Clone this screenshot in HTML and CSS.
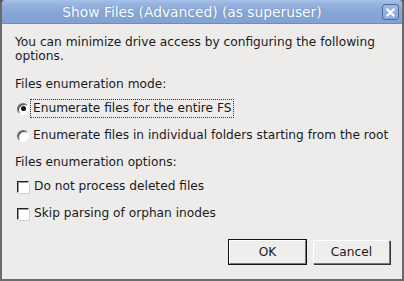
FILE: index.html
```html
<!DOCTYPE html>
<html lang="en">
<head>
    <meta charset="UTF-8">
    <title>Show Files (Advanced) (as superuser)</title>
    <link rel="stylesheet" href="styles.css">
</head>
<body>
    <!-- Dialog window -->
    <div class="window">
        <div class="titlebar">
            <span class="title">Show Files (Advanced) (as superuser)</span>
            <span class="close">
                <svg width="11" height="11" viewBox="0 0 11 11">
                    <path d="M2.5 2.5 L8.5 8.5 M8.5 2.5 L2.5 8.5" stroke="#fff" stroke-width="2.2" stroke-linecap="square"/>
                </svg>
            </span>
        </div>

        <div class="content">
            <p class="intro">You can minimize drive access by configuring the following options.</p>

            <p class="group-label">Files enumeration mode:</p>
            <div class="option">
                <span class="radio checked"></span>
                <span class="label focused">Enumerate files for the entire FS</span>
            </div>
            <div class="option">
                <span class="radio"></span>
                <span class="label">Enumerate files in individual folders starting from the root</span>
            </div>

            <p class="group-label options-label">Files enumeration options:</p>
            <div class="option">
                <span class="check"></span>
                <span class="label">Do not process deleted files</span>
            </div>
            <div class="option">
                <span class="check"></span>
                <span class="label">Skip parsing of orphan inodes</span>
            </div>

            <div class="buttons">
                <button class="btn default">OK</button>
                <button class="btn">Cancel</button>
            </div>
        </div>
    </div>
</body>
</html>
```

FILE: styles.css
```css
body {
    margin: 0;
    padding: 0;
    font-family: "DejaVu Sans", sans-serif;
    font-size: 12.2px;
    color: #1a1a1a;
    background-color: #5e5e5e;
}
/* Window frame */
.window {
    width: 404px;
    height: 281px;
    box-sizing: border-box;
    background-color: #edeceb;
    border-left: 2px solid #6a6a6a;
    border-right: 2px solid #6a6a6a;
    border-bottom: 2px solid #6a6a6a;
    border-radius: 5px 5px 0 0;
    overflow: hidden;
    display: flex;
    flex-direction: column;
}
/* Title bar */
.titlebar {
    height: 23px;
    margin: 0 -2px;
    display: flex;
    align-items: center;
    justify-content: center;
    position: relative;
    background: linear-gradient(#a8c1e8 0, #97b4e1 4px, #87a6d6 12px, #83a2d3 100%);
    border-bottom: 1px solid #6d8cbd;
    border-radius: 5px 5px 0 0;
}
.titlebar .title {
    color: #fff;
    font-size: 13.8px;
    text-shadow: 0 0 1px #5b7cb0;
    margin-left: -20px;
}
.titlebar .close {
    position: absolute;
    right: 5px;
    top: 4px;
    width: 15px;
    height: 14px;
    border: 1px solid #4c6b9c;
    border-radius: 3px;
    background: linear-gradient(#9db8e2, #8aa9d8);
    display: flex;
    align-items: center;
    justify-content: center;
}
/* Content */
.content {
    padding: 11px 13px 0 13px;
    flex: 1;
    display: flex;
    flex-direction: column;
}
.content p {
    margin: 0;
    line-height: 14px;
}
.intro {
    margin-bottom: 14px !important;
}
.group-label {
    margin-bottom: 4px !important;
}
.options-label {
    margin-top: 6px !important;
    margin-bottom: 4px !important;
}
.option {
    display: flex;
    align-items: center;
    height: 27px;
    padding-left: 2px;
    white-space: nowrap;
}
.option .label {
    margin-left: 1px;
    padding: 1px 2px;
    border: 1px solid transparent;
    line-height: 15px;
}
.option .label.focused {
    border: 1px dotted #333;
}
/* Radio buttons */
.radio {
    flex-shrink: 0;
    width: 12px;
    height: 12px;
    border-radius: 50%;
    background-color: #fff;
    box-sizing: border-box;
    border: 1px solid;
    border-color: #6e6e6e #fff #fff #6e6e6e;
    box-shadow: inset 1px 1px 0 #444;
    position: relative;
}
.radio.checked::after {
    content: "";
    position: absolute;
    left: 2.5px;
    top: 2.5px;
    width: 5px;
    height: 5px;
    border-radius: 50%;
    background-color: #111;
}
/* Checkboxes */
.check {
    flex-shrink: 0;
    width: 12px;
    height: 12px;
    box-sizing: border-box;
    background-color: #fff;
    border: 1px solid;
    border-color: #222 #fff #fff #222;
    box-shadow: 1px 1px 0 #d0d0d0, inset 1px 1px 0 #9a9a9a;
    margin-right: 1px;
}
/* Buttons */
.buttons {
    display: flex;
    justify-content: flex-end;
    gap: 7px;
    margin-top: auto;
    margin-bottom: 15px;
    margin-right: -1px;
}
.btn {
    width: 77px;
    height: 24px;
    font-family: "DejaVu Sans", sans-serif;
    font-size: 12.2px;
    color: #1a1a1a;
    background-color: #eeeeec;
    border: 1px solid;
    border-color: #fff #777 #777 #fff;
    box-shadow: 1px 1px 0 #333;
}
.btn.default {
    outline: 1px solid #111;
}
```
